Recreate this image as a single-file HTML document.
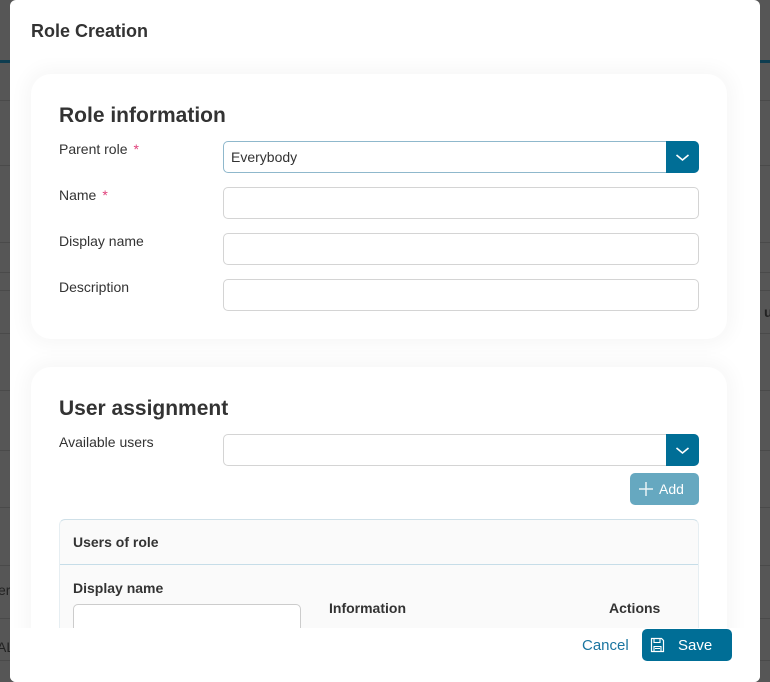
<!DOCTYPE html>
<html><head><meta charset="utf-8"><style>
*{box-sizing:border-box;margin:0;padding:0}
body{width:770px;height:682px;overflow:hidden;background:#565656;font-family:"Liberation Sans",sans-serif;color:#333;position:relative}
.bgl{position:absolute;left:0;right:0;height:1px;background:#4a4a4a}
.bgt{position:absolute;font-size:14px;color:#222}
.modal{position:absolute;left:10px;top:0;width:750px;height:682px;background:#fff;border-radius:6px;overflow:hidden}
.title{position:absolute;left:21px;top:21px;font-size:18px;font-weight:bold;color:#333}
.body{position:absolute;left:0;top:58px;width:738px;height:570px;overflow:hidden;background:#fff}
.card{position:absolute;left:21px;width:696px;background:#fff;border-radius:20px;box-shadow:0 0 18px 6px rgba(0,0,0,0.035)}
h2{position:absolute;left:28px;font-size:21px;font-weight:bold;color:#333}
.lbl{position:absolute;left:28px;font-size:14px;color:#333}
.req{color:#e0407a;margin-left:6px}
.inp{position:absolute;left:192px;width:476px;height:32px;border:1px solid #d4d4d4;border-radius:5px;background:#fff;font-size:14px;padding:7px 7px}
.sel{border-color:#8fb8cc}
.dd{position:absolute;right:-1px;top:-1px;width:33px;height:32px;background:#006e96;border-radius:0 5px 5px 0}
.add{position:absolute;left:599px;top:106px;width:69px;height:32px;background:#66a8c0;border-radius:5px;font-size:14px;color:#fff}
.tbl{position:absolute;left:28px;top:152px;width:640px;height:120px;border:1px solid #cfe0e8;border-left-color:#e6eef2;border-right-color:#e6eef2;border-bottom:none;border-radius:6px 6px 0 0;background:#fafafa}
.b{font-weight:bold;font-size:14px;color:#333;position:absolute}
.footer{position:absolute;left:0;top:628px;width:750px;height:54px;background:#fff}
</style></head><body>
<div class="bgl" style="top:60px;height:3px;background:#0d3d50"></div>
<div class="bgl" style="top:100px"></div><div class="bgl" style="top:165px"></div>
<div class="bgl" style="top:242px"></div><div class="bgl" style="top:272px"></div>
<div class="bgl" style="top:290px"></div><div class="bgl" style="top:333px"></div>
<div class="bgl" style="top:390px"></div><div class="bgl" style="top:450px"></div>
<div class="bgl" style="top:507px"></div><div class="bgl" style="top:565px"></div>
<div class="bgl" style="top:618px"></div><div class="bgl" style="top:660px"></div>
<div class="bgt" style="left:764px;top:304px;font-weight:bold">u</div>
<div class="bgt" style="left:-2px;top:582px">er</div>
<div class="bgt" style="left:-3px;top:639px">AL</div>
<div class="modal">
<div class="title">Role Creation</div>
<div class="body">
 <div class="card" style="top:16px;height:265px">
  <h2 style="top:30px">Role information</h2>
  <div class="lbl" style="top:67px">Parent role<span class="req">*</span></div>
  <div class="inp sel" style="top:67px">Everybody<div class="dd"><svg width="33" height="32"><path d="M10.5 14l6 5 6-5" stroke="#fff" stroke-width="1.6" fill="none"/></svg></div></div>
  <div class="lbl" style="top:113px">Name<span class="req">*</span></div>
  <div class="inp" style="top:113px"></div>
  <div class="lbl" style="top:159px">Display name</div>
  <div class="inp" style="top:159px"></div>
  <div class="lbl" style="top:205px">Description</div>
  <div class="inp" style="top:205px"></div>
 </div>
 <div class="card" style="top:309px;height:300px">
  <h2 style="top:30px">User assignment</h2>
  <div class="lbl" style="top:67px">Available users</div>
  <div class="inp" style="top:67px"><div class="dd"><svg width="33" height="32"><path d="M10.5 14l6 5 6-5" stroke="#fff" stroke-width="1.6" fill="none"/></svg></div></div>
  <div class="add"><svg style="position:absolute;left:8px;top:8px" width="16" height="16"><path d="M8 1v14M1 8h14" stroke="#e8f2f6" stroke-width="1.5"/></svg><span style="position:absolute;left:29px;top:8px">Add</span></div>
  <div class="tbl">
   <div class="b" style="left:13px;top:14px">Users of role</div>
   <div style="position:absolute;left:0;right:0;top:44px;height:1px;background:#c6dde8"></div>
   <div class="b" style="left:13px;top:60px">Display name</div>
   <div style="position:absolute;left:13px;top:84px;width:228px;height:40px;border:1px solid #ccc;border-radius:5px;background:#fff"></div>
   <div class="b" style="left:269px;top:80px">Information</div>
   <div class="b" style="left:549px;top:80px">Actions</div>
  </div>
 </div>
</div>
<div class="footer">
 <div style="position:absolute;left:572px;top:9px;font-size:15px;color:#1a75a0">Cancel</div>
 <div style="position:absolute;left:632px;top:1px;width:90px;height:32px;background:#006e96;border-radius:5px">
  <svg style="position:absolute;left:8px;top:8px" width="15" height="16" viewBox="0 0 15 16"><path d="M1.5 1.5h10l2 2v11h-12z" fill="none" stroke="#fff" stroke-width="1.2"/><path d="M4 1.5v4h6v-4M4 14.5v-5h7v5M5 11.5h5" fill="none" stroke="#fff" stroke-width="1.1"/></svg>
  <span style="position:absolute;left:36px;top:8px;font-size:15px;color:#fff">Save</span>
 </div>
</div>
</div>
</body></html>
